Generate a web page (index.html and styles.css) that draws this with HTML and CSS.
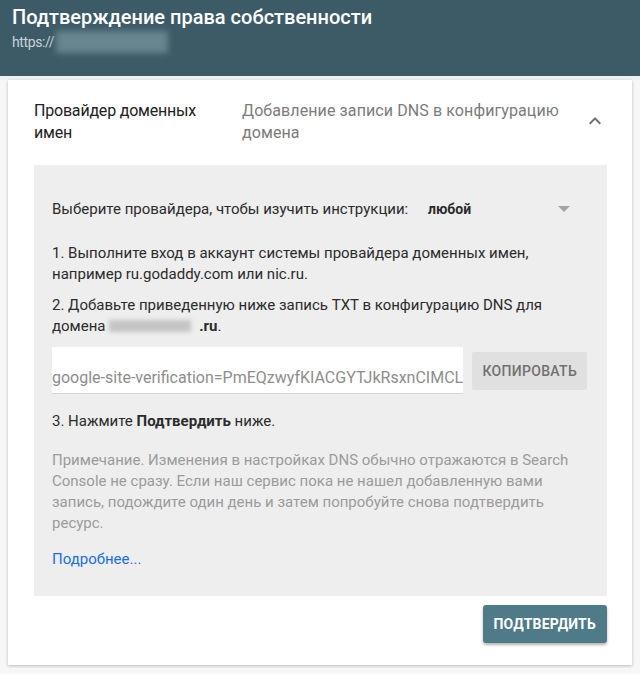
FILE: index.html
```html
<!DOCTYPE html>
<html lang="ru">
<head>
  <meta charset="UTF-8">
  <title>Подтверждение права собственности</title>
  <link rel="stylesheet" href="styles.css">
</head>
<body>
  <header class="dialog-head">
    <h1 class="dialog-title">Подтверждение права собственности</h1>
    <div class="dialog-url">https://<span class="blurred url-blur"></span></div>
  </header>

  <main class="card">
    <div class="step-head">
      <div class="step-name">Провайдер доменных имен</div>
      <div class="step-desc">Добавление записи DNS в конфигурацию домена</div>
      <svg class="chevron" viewBox="0 0 24 24" width="24" height="24"><path d="M12 8l-6 6 1.41 1.41L12 10.83l4.59 4.58L18 14z"/></svg>
    </div>

    <div class="panel">
      <div class="provider-row">
        <span class="provider-label">Выберите провайдера, чтобы изучить инструкции:</span>
        <div class="select">
          <span class="select-value">любой</span>
          <svg class="select-arrow" viewBox="0 0 12 6" width="12" height="6"><path d="M0 0l6 6 6-6z"/></svg>
        </div>
      </div>

      <p class="step">1. Выполните вход в аккаунт системы провайдера доменных имен, например ru.godaddy.com или nic.ru.</p>
      <p class="step">2. Добавьте приведенную ниже запись TXT в конфигурацию DNS для домена <span class="blurred domain-blur"></span><b>.ru</b>.</p>

      <div class="record-row">
        <div class="record-field">google-site-verification=PmEQzwyfKIACGYTJkRsxnCIMCL</div>
        <button class="copy-btn">КОПИРОВАТЬ</button>
      </div>

      <p class="step">3. Нажмите <b>Подтвердить</b> ниже.</p>

      <p class="note">Примечание. Изменения в настройках DNS обычно отражаются в Search Console не сразу. Если наш сервис пока не нашел добавленную вами запись, подождите один день и затем попробуйте снова подтвердить ресурс.</p>

      <a class="more-link" href="#">Подробнее...</a>
    </div>

    <div class="actions">
      <button class="verify-btn">ПОДТВЕРДИТЬ</button>
    </div>
  </main>
</body>
</html>
```

FILE: styles.css
```css
body {
  margin: 0;
  background: #f7f7f7;
  font-family: Roboto, "Noto Sans", sans-serif;
  color: #212121;
}

/* шапка диалога */
.dialog-head {
  background: #3d5a67;
  height: 80px;
  padding: 5px 12px 0;
  box-sizing: border-box;
  border-bottom: 4px solid #eef0f1;
}
.dialog-title {
  margin: 0;
  font-size: 20px;
  font-weight: 500;
  line-height: 24px;
  color: #ffffff;
}
.dialog-url {
  display: flex;
  align-items: center;
  font-size: 14px;
  letter-spacing: -0.4px;
  line-height: 26px;
  color: #c9d3d8;
}
.blurred {
  display: inline-block;
  filter: blur(3px);
}
.url-blur {
  width: 112px;
  height: 22px;
  margin-left: 2px;
  background: #67868e;
}
.domain-blur {
  width: 82px;
  height: 12px;
  margin-right: 8px;
  vertical-align: -1px;
  background: #c4c4c4;
  filter: blur(2px);
}

/* карточка */
.card {
  margin: 0 8px 10px;
  background: #ffffff;
  box-shadow: 0 1px 3px rgba(0, 0, 0, 0.25);
  padding: 20px 25px 22px 26px;
}
.step-head {
  display: flex;
  align-items: flex-start;
  font-size: 16px;
  line-height: 22px;
}
.step-name {
  flex: 0 0 208px;
  box-sizing: border-box;
  padding-right: 40px;
  letter-spacing: -0.2px;
}
.step-desc {
  flex: 1;
  color: #7b7b7b;
  padding-right: 20px;
  letter-spacing: 0.1px;
}
.chevron {
  fill: #6f6f6f;
  margin: 9px 0 0;
}

.panel {
  margin-top: 21px;
  background: #eeeeee;
  padding: 30px 20px 26px 18px;
  font-size: 15px;
  line-height: 21px;
  color: #2b2b2b;
}
.provider-row {
  display: flex;
  align-items: center;
  height: 28px;
  margin-bottom: 20px;
}
.provider-label {
  width: 376px;
}
.select {
  display: flex;
  align-items: center;
  justify-content: space-between;
  width: 142px;
}
.select-value {
  font-weight: 700;
  font-size: 14px;
}
.select-arrow {
  fill: #a3a3a3;
}
.step {
  margin: 0 0 10px;
}
.step b {
  font-weight: 700;
}

.record-row {
  display: flex;
  align-items: center;
  gap: 9px;
  margin: 9px 0 17px;
}
.record-field {
  width: 418px;
  height: 47px;
  box-sizing: border-box;
  padding-top: 20px;
  background: #ffffff;
  border-bottom: 1px solid #d5d5d5;
  overflow: hidden;
  white-space: nowrap;
  font-size: 16px;
  line-height: 22px;
  color: #8d8d8d;
}
.copy-btn {
  height: 38px;
  padding: 0 10px;
  border: none;
  border-radius: 2px;
  background: #e0e0e0;
  color: #717171;
  font-family: inherit;
  font-size: 14px;
  font-weight: 500;
  letter-spacing: 0.3px;
}

.note {
  margin: 18px 0 15px;
  color: #9b9b9b;
}
.more-link {
  color: #1a6ee8;
  text-decoration: none;
}

.actions {
  display: flex;
  justify-content: flex-end;
  margin-top: 9px;
}
.verify-btn {
  height: 38px;
  padding: 0 11px;
  border: none;
  border-radius: 3px;
  background: #4f7a88;
  color: #ffffff;
  font-family: inherit;
  font-size: 14px;
  font-weight: 700;
  letter-spacing: 0.2px;
  box-shadow: 0 2px 3px rgba(0, 0, 0, 0.3);
}
```
